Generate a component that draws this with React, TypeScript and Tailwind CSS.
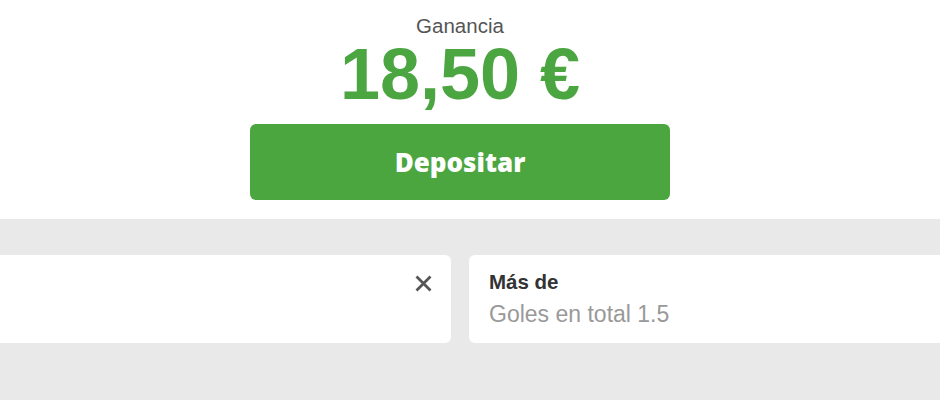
import React from "react";

export default function App() {
  return (
    <div className="w-[940px] h-[400px] overflow-hidden bg-[#e9e9e9]" style={{ fontFamily: '"Liberation Sans", Arial, sans-serif' }}>
      <div className="bg-white h-[219px] flex flex-col items-center pt-[14px] pr-[20px]">
        <div className="text-[20.5px] leading-[24px] text-[#555555]">Ganancia</div>
        <div className="text-[72px] leading-[72px] font-bold text-[#4ba540]">18,50 €</div>
        <button
          className="mt-[14px] w-[420px] h-[76px] rounded-[6px] bg-[#4ca640] text-white text-[26px] font-extrabold flex items-center justify-center"
          style={{ fontFamily: '"Open Sans", sans-serif' }}
        >
          Depositar
        </button>
      </div>
      <div className="flex gap-[18px] ml-[-20px] pt-[36px]">
        <div className="w-[471px] h-[88px] shrink-0 bg-white rounded-[6px] flex justify-end pt-[20px] pr-[19px]">
          <svg width="17" height="17" viewBox="0 0 17 17">
            <path d="M1.5 1.5 L15.5 15.5 M15.5 1.5 L1.5 15.5" stroke="#555555" strokeWidth="2.8" strokeLinecap="butt" />
          </svg>
        </div>
        <div className="w-[480px] h-[88px] shrink-0 bg-white rounded-[6px] pl-[20px] pt-[15px]">
          <div className="text-[20.5px] leading-[24px] font-bold text-[#333333]">Más de</div>
          <div className="text-[23px] leading-[28px] text-[#999999] mt-[6px]">Goles en total 1.5</div>
        </div>
      </div>
    </div>
  );
}
